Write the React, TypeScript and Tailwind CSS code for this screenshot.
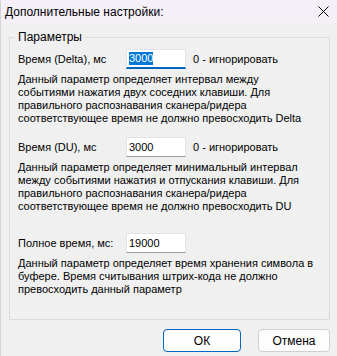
import React from 'react';

const ui = "font-['Liberation_Sans',Arial,sans-serif]";
const body = "font-['Liberation_Sans',Arial,sans-serif] text-[11px] leading-[13px]";

interface FieldRowProps {
  label: string;
  value: string;
  hint?: string;
  focused?: boolean;
}

const FieldRow: React.FC<FieldRowProps> = ({ label, value, hint, focused }) => {
  return (
    <div className={`flex items-center h-[20px] ${body} text-black`}>
      <span className="w-[108px] shrink-0">{label}</span>
      <div
        className={`w-[60px] h-[20px] bg-white border border-[#e3e3e3] flex items-center pl-[2px] ${
          focused ? 'border-b-2 border-b-[#0067c0]' : 'border-b-[#9a9a9a]'
        }`}
      >
        {focused ? (
          <span className="bg-[#0078d7] text-white">{value}</span>
        ) : (
          <span>{value}</span>
        )}
      </div>
      {hint && <span className="ml-[7px]">{hint}</span>}
    </div>
  );
};

const Note: React.FC<{ children: React.ReactNode; className?: string }> = ({ children, className }) => (
  <p className={`${body} text-black w-[300px] ${className ?? ''}`}>{children}</p>
);

const App: React.FC = () => {
  return (
    <div className="w-[337px] h-[356px] bg-[#f0f0f0] border-l border-l-[#d4d4d4] overflow-hidden">
      {/* title bar */}
      <div className="h-[23px] bg-[#f5eff8] flex items-center justify-between pl-[4px] pr-[8px]">
        <span className={`${ui} text-[12px] text-black`}>Дополнительные настройки:</span>
        <svg width="11" height="11" viewBox="0 0 11 11" className="text-black">
          <path d="M0.5 0.5 L10.5 10.5 M10.5 0.5 L0.5 10.5" stroke="currentColor" strokeWidth="1" />
        </svg>
      </div>

      <div className="pt-[7px]">
        <fieldset className="ml-[8px] w-[321px] border border-[#dcdcdc] pl-[5px] pb-[23px]">
          <legend className={`${ui} text-[12px] leading-[15px] px-[3px] text-black`}>Параметры</legend>
          <div className="pl-[3px]">
            <div className="mt-[4px]">
              <FieldRow label="Время (Delta), мс" value="3000" hint="0 - игнорировать" focused />
            </div>
            <Note className="mt-[4px]">
              Данный параметр определяет интервал между событиями нажатия двух соседних клавиши. Для
              правильного распознавания сканера/ридера соответствующее время не должно превосходить Delta
            </Note>

            <div className="mt-[12px]">
              <FieldRow label="Время (DU), мс" value="3000" hint="0 - игнорировать" />
            </div>
            <Note className="mt-[4px]">
              Данный параметр определяет минимальный интервал между событиями нажатия и отпускания
              клавиши. Для правильного распознавания сканера/ридера соответствующее время не должно
              превосходить DU
            </Note>

            <div className="mt-[20px]">
              <FieldRow label="Полное время, мс:" value="19000" />
            </div>
            <Note className="mt-[4px]">
              Данный параметр определяет время хранения символа в буфере. Время считывания штрих-кода не
              должно превосходить данный параметр
            </Note>
          </div>
        </fieldset>

        <div className="flex justify-end gap-[17px] pr-[7px] mt-[9px]">
          <button className={`${ui} w-[78px] h-[23px] rounded-[4px] border border-[#0067c0] bg-[#fdfdfd] text-[12px] text-black`}>
            ОК
          </button>
          <button className={`${ui} w-[72px] h-[23px] rounded-[4px] border border-[#d0d0d0] bg-[#fdfdfd] text-[12px] text-black`}>
            Отмена
          </button>
        </div>
      </div>
    </div>
  );
};

export default App;
